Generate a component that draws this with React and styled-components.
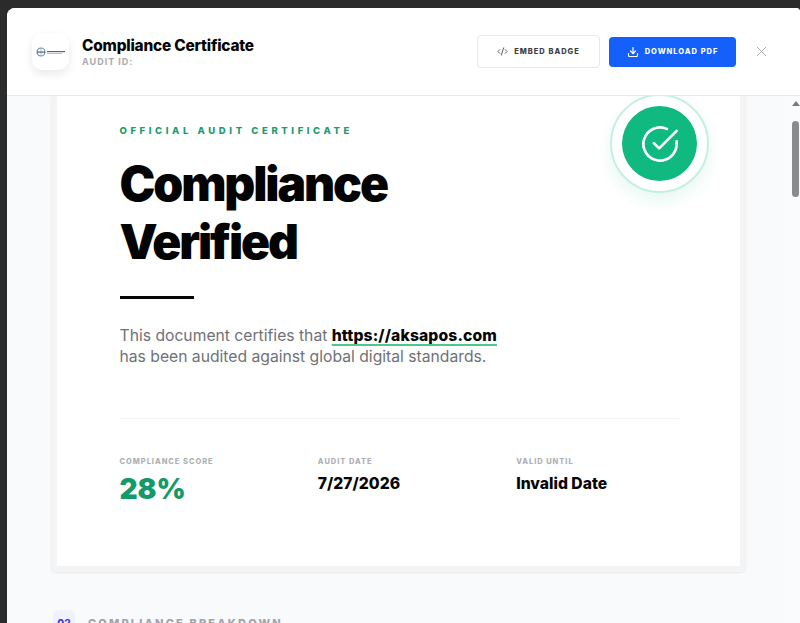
import React from "react";
import styled, { createGlobalStyle } from "styled-components";
import { Code2, Download, X } from "lucide-react";

const GlobalStyle = createGlobalStyle`
  html, body {
    margin: 0;
    padding: 0;
    height: 100%;
    background: #2b2b2b;
    font-family: "Inter", "Liberation Sans", sans-serif;
    overflow: hidden;
  }
  * { box-sizing: border-box; }
`;

const Backdrop = styled.div`
  height: 623px;
  padding: 8px 0 0 7px;
  background: #2b2b2b;
`;

const Modal = styled.div`
  display: flex;
  flex-direction: column;
  height: 615px;
  background: #f8fafb;
  border-radius: 8px 4px 0 0;
  overflow: hidden;
`;

const Header = styled.header`
  display: flex;
  align-items: center;
  justify-content: space-between;
  flex: none;
  height: 88px;
  padding: 0 30px 0 25px;
  background: #fff;
  border-bottom: 1px solid #e8eaed;
`;

const Brand = styled.div`
  display: flex;
  align-items: center;
  gap: 13px;
`;

const LogoBox = styled.div`
  display: flex;
  align-items: center;
  justify-content: center;
  width: 37px;
  height: 37px;
  border-radius: 11px;
  background: #fff;
  box-shadow: 0 4px 9px rgba(15, 23, 42, 0.09);
`;

const Title = styled.div`
  font-size: 15.4px;
  font-weight: 800;
  letter-spacing: -0.2px;
  line-height: 17px;
  color: #050505;
`;

const AuditId = styled.div`
  margin-top: 2px;
  font-size: 9px;
  font-weight: 700;
  letter-spacing: 1px;
  line-height: 11px;
  color: #a8abb1;
`;

const Actions = styled.div`
  display: flex;
  align-items: center;
`;

const ActionButton = styled.button`
  display: flex;
  align-items: center;
  justify-content: center;
  gap: 6px;
  height: ${({ $primary }) => ($primary ? "30px" : "33px")};
  width: ${({ $primary }) => ($primary ? "127px" : "123px")};
  margin-right: ${({ $primary }) => ($primary ? "17px" : "9px")};
  padding: 0;
  border: ${({ $primary }) => ($primary ? "none" : "1.5px solid #e4e6e9")};
  border-radius: 4px;
  background: ${({ $primary }) => ($primary ? "#1560fb" : "#fff")};
  color: ${({ $primary }) => ($primary ? "#fff" : "#3a3d44")};
  font-family: inherit;
  font-size: 7.5px;
  font-weight: 800;
  letter-spacing: 1px;
  text-transform: uppercase;
`;

const CloseButton = styled.button`
  display: flex;
  padding: 0;
  border: none;
  background: none;
  color: #a3a6ab;
`;

const Body = styled.div`
  display: flex;
  flex: 1;
  min-height: 0;
`;

const Content = styled.main`
  flex: 1;
  min-width: 0;
  padding: 0 45px 0 44px;
  overflow: hidden;
`;

const Card = styled.section`
  position: relative;
  height: 476px;
  padding: 29px 61.5px 0 62.5px;
  background: #fff;
  border: 6px solid #f4f4f4;
  border-top: none;
  border-radius: 0 0 6px 6px;
  box-shadow: 0 1px 2px rgba(15, 23, 42, 0.08);
`;

const Seal = styled.div`
  position: absolute;
  top: -2px;
  right: 31px;
  display: flex;
  align-items: center;
  justify-content: center;
  width: 99px;
  height: 99px;
  border: 2.5px solid #c3f0df;
  border-radius: 50%;
  background: #fff;
  box-shadow: 0 8px 16px rgba(16, 185, 129, 0.1);
`;

const SealInner = styled.div`
  display: flex;
  align-items: center;
  justify-content: center;
  width: 75px;
  height: 75px;
  border-radius: 50%;
  background: #0fb97f;
`;

const Eyebrow = styled.div`
  font-size: 9.5px;
  font-weight: 800;
  letter-spacing: 3.6px;
  line-height: 12px;
  color: #1c9c6d;
  text-transform: uppercase;
`;

const Heading = styled.h1`
  margin: 18px 0 0;
  font-size: 48px;
  font-weight: 900;
  letter-spacing: -2.1px;
  line-height: 58px;
  color: #030303;
`;

const Rule = styled.div`
  width: 74px;
  height: 3px;
  margin-top: 25px;
  background: #060606;
`;

const Lead = styled.p`
  margin: 26px 0 0;
  font-size: 15.7px;
  line-height: 21px;
  color: #6f7176;
`;

const SiteLink = styled.span`
  font-weight: 800;
  letter-spacing: 0.12px;
  color: #060606;
  text-decoration: underline 2px #4cc98a;
  text-underline-offset: 3px;
`;

const Stats = styled.div`
  display: grid;
  grid-template-columns: repeat(3, 1fr);
  column-gap: 36px;
  height: 100px;
  margin-top: 51px;
  padding-top: 37px;
  border-top: 1px solid #f1f2f3;
`;

const StatLabel = styled.div`
  font-size: 7.5px;
  font-weight: 800;
  letter-spacing: 0.95px;
  line-height: 11px;
  color: #aeb0b4;
  text-transform: uppercase;
`;

const StatValue = styled.div`
  margin-top: ${({ $big }) => ($big ? "4px" : "5px")};
  font-size: ${({ $big }) => ($big ? "28px" : "15.7px")};
  font-weight: ${({ $big }) => ($big ? 900 : 800)};
  line-height: ${({ $big }) => ($big ? "36px" : "24px")};
  color: ${({ $big }) => ($big ? "#129a68" : "#050505")};
`;

const SectionRow = styled.div`
  display: flex;
  align-items: center;
  gap: 13px;
  margin: 38px 0 0 2px;
`;

const SectionNum = styled.div`
  display: flex;
  align-items: center;
  justify-content: center;
  width: 22px;
  height: 25px;
  border-radius: 6px;
  background: #f0f1fd;
  color: #4338e0;
  font-size: 10px;
  font-weight: 800;
`;

const SectionTitle = styled.div`
  font-size: 11px;
  font-weight: 800;
  letter-spacing: 2.15px;
  color: #a1a4aa;
  text-transform: uppercase;
`;

const Scrollbar = styled.div`
  display: flex;
  flex-direction: column;
  align-items: center;
  flex: none;
  width: 9px;
  padding-top: 5px;
  background: #fafbfc;
`;

const ScrollArrow = styled.div`
  width: 0;
  height: 0;
  border-left: 4px solid transparent;
  border-right: 4px solid transparent;
  border-bottom: 5px solid #7a7a7a;
`;

const ScrollThumb = styled.div`
  width: 7px;
  height: 76px;
  margin-top: 15px;
  border-radius: 4px;
  background: #8a8a8a;
`;

function Logo() {
  return (
    <svg width="32" height="12" viewBox="0 0 32 12" aria-hidden="true">
      <circle cx="6" cy="6" r="4" fill="none" stroke="#6f92a6" strokeWidth="1.2" />
      <path d="M2 6h8M6 2v8" stroke="#8aa4b3" strokeWidth="0.7" />
      <rect x="2" y="5.4" width="8" height="1.6" fill="#27465c" opacity="0.5" />
      <rect x="12" y="5" width="18" height="1.2" fill="#4a6b80" />
      <rect x="12" y="7" width="15" height="0.8" fill="#a3b5c0" />
    </svg>
  );
}

function CheckBadge() {
  return (
    <svg width="42" height="42" viewBox="0 0 24 24" fill="none" stroke="#fff" strokeWidth="1.55" strokeLinecap="round" strokeLinejoin="round">
      <path d="M21.5 10.5v1.5a9.5 9.5 0 1 1-5.6-8.65" />
      <path d="M8.5 11.5l3 3L21.5 4.5" />
    </svg>
  );
}

export default function App() {
  return (
    <Backdrop>
      <GlobalStyle />
      <Modal>
        <Header>
          <Brand>
            <LogoBox>
              <Logo />
            </LogoBox>
            <div>
              <Title>Compliance Certificate</Title>
              <AuditId>AUDIT ID:</AuditId>
            </div>
          </Brand>
          <Actions>
            <ActionButton>
              <Code2 size={11} strokeWidth={1.8} />
              Embed Badge
            </ActionButton>
            <ActionButton $primary>
              <Download size={12} strokeWidth={2.4} />
              Download PDF
            </ActionButton>
            <CloseButton>
              <X size={17} strokeWidth={1.3} />
            </CloseButton>
          </Actions>
        </Header>
        <Body>
          <Content>
            <Card>
              <Seal>
                <SealInner>
                  <CheckBadge />
                </SealInner>
              </Seal>
              <Eyebrow>Official Audit Certificate</Eyebrow>
              <Heading>
                Compliance
                <br />
                Verified
              </Heading>
              <Rule />
              <Lead>
                This document certifies that <SiteLink>https://aksapos.com</SiteLink>
                <br />
                has been audited against global digital standards.
              </Lead>
              <Stats>
                <div>
                  <StatLabel>Compliance Score</StatLabel>
                  <StatValue $big>28%</StatValue>
                </div>
                <div>
                  <StatLabel>Audit Date</StatLabel>
                  <StatValue>7/27/2026</StatValue>
                </div>
                <div>
                  <StatLabel>Valid Until</StatLabel>
                  <StatValue>Invalid Date</StatValue>
                </div>
              </Stats>
            </Card>
            <SectionRow>
              <SectionNum>02</SectionNum>
              <SectionTitle>Compliance Breakdown</SectionTitle>
            </SectionRow>
          </Content>
          <Scrollbar>
            <ScrollArrow />
            <ScrollThumb />
          </Scrollbar>
        </Body>
      </Modal>
    </Backdrop>
  );
}
